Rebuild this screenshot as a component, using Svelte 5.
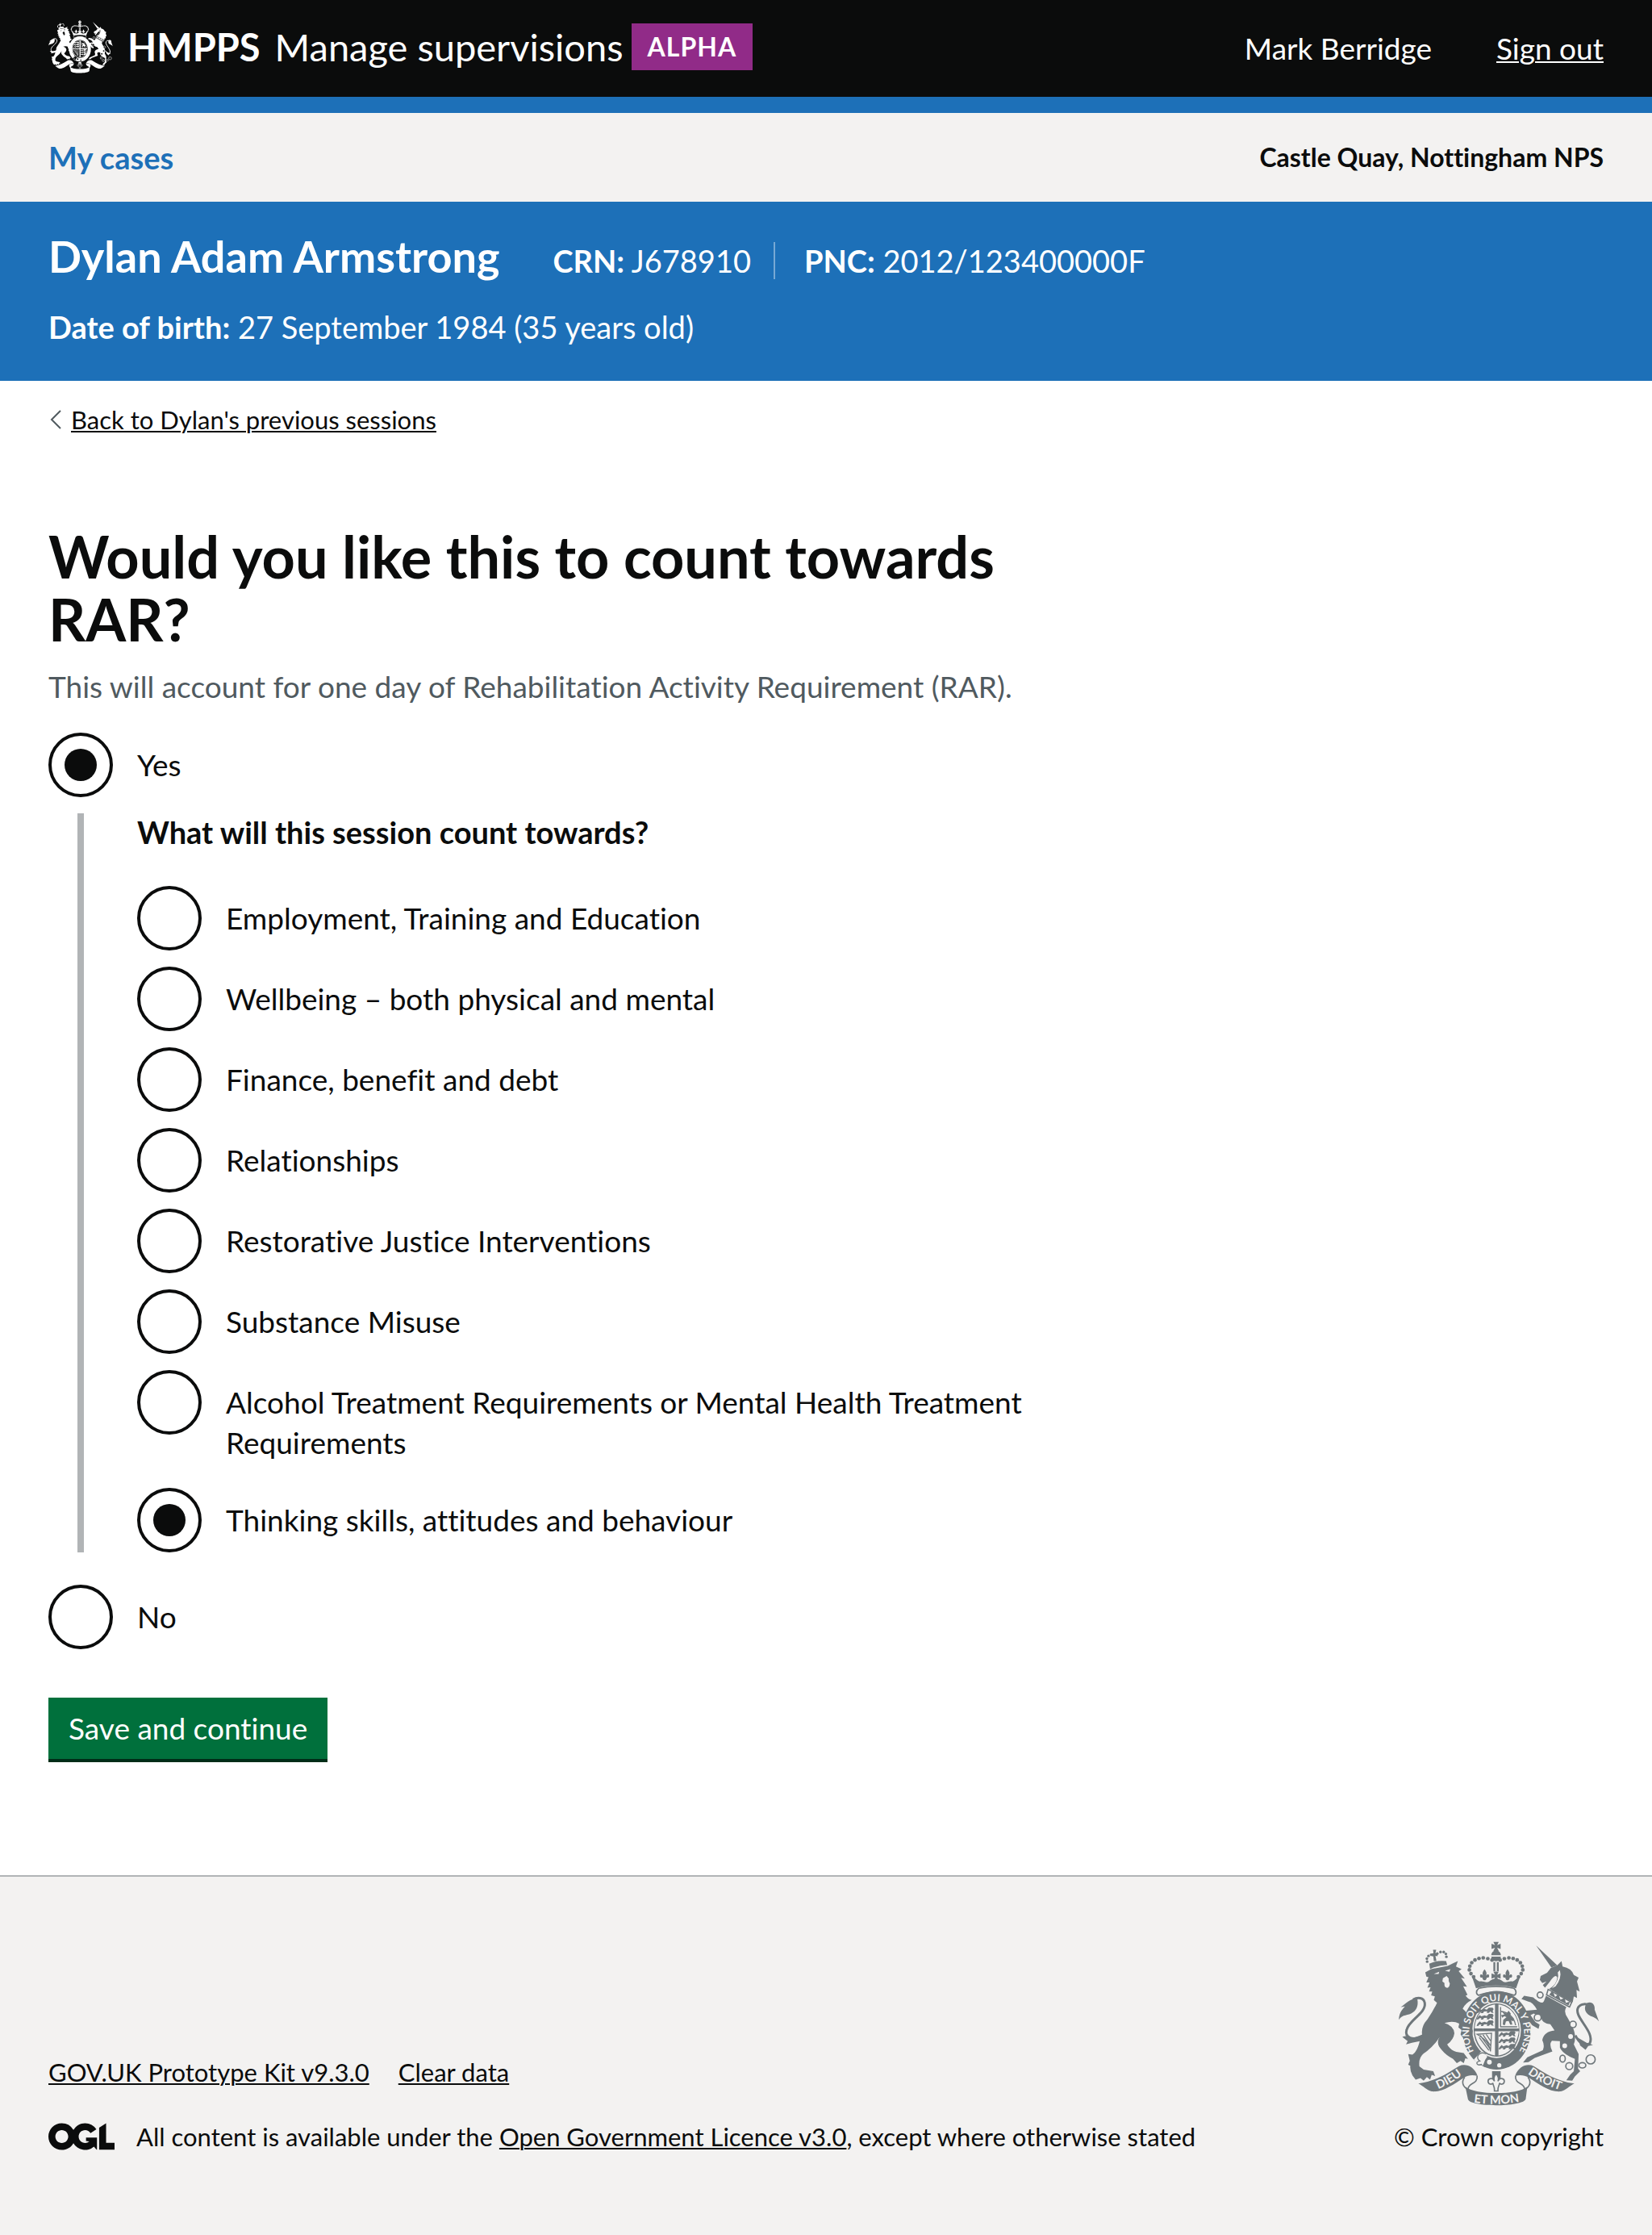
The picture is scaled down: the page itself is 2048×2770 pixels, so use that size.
<script>
  const activities = [
    { value: 'ete', label: 'Employment, Training and Education' },
    { value: 'wellbeing', label: 'Wellbeing – both physical and mental' },
    { value: 'finance', label: 'Finance, benefit and debt' },
    { value: 'relationships', label: 'Relationships' },
    { value: 'restorative', label: 'Restorative Justice Interventions' },
    { value: 'substance', label: 'Substance Misuse' },
    { value: 'treatment', label: 'Alcohol Treatment Requirements or Mental Health Treatment Requirements' },
    { value: 'thinking', label: 'Thinking skills, attitudes and behaviour' }
  ];

  let countsTowardsRar = $state('yes');
  let activity = $state('thinking');

  // Pearls on the left arch of the crown; the right arch mirrors them.
  const pearls = [
    [446, 146], [430, 141], [413, 138], [397, 140], [382, 146],
    [370, 156], [363, 169], [361, 183], [367, 197], [377, 209]
  ];
  const smallPearls = [[203, 152], [202, 141], [208, 131], [218, 126], [229, 127], [241, 122], [253, 116], [265, 116], [273, 123], [275, 134]];
  // Passant lions on the first and fourth quarters.
  const lions = [[392, 336], [392, 360], [392, 384], [474, 424], [474, 448], [474, 472]];
</script>

{#snippet fleur(x, y)}
  <path transform="translate({x} {y})" d="M0-24C9-14 9-6 4 3 7-6 15-8 17-1 18 6 12 9 8 6 9 11 5 14 3 17H-3C-5 14-9 11-8 6-12 9-18 6-17-1-15-8-7-6-4 3-9-6-9-14 0-24Z" />
{/snippet}

{#snippet pattee(x, y)}
  <path transform="translate({x} {y})" d="M-10-17H10L4-5 17-10V10L4 5 10 17H-10L-4 5-17 10V-10L-4-5Z" />
{/snippet}

{#snippet crest(detailed)}
  <svg class="crest" viewBox="94 76 754 616" fill="currentColor" aria-hidden="true">
    <!-- crown -->
    {@render pattee(461, 95)}
    <path d="M443 128A18 18 0 0 1 479 128ZM443 133H479A18 18 0 0 1 443 133Z" />
    {#each pearls as [x, y]}
      <circle cx={x} cy={y} r="7" />
      <circle cx={922 - x} cy={y} r="7" />
    {/each}
    <path d="M451 154H458V188H451ZM464 154H471V188H464Z" />
    {@render fleur(418, 205)}
    {@render fleur(504, 205)}
    {@render pattee(461, 206)}
    <path d="M370 206C384 212 389 226 401 226 410 222 428 236 438 224 450 214 472 214 484 224 494 236 512 222 521 226 533 226 538 212 552 206L536 252C490 238 432 238 386 252Z" />
    <path class="line" d="M396 252C440 242 482 242 528 252 540 262 536 276 528 278 480 262 442 262 396 278 386 274 384 262 396 252Z" />

    <!-- garter and shield -->
    <ellipse cx="463" cy="409" rx="128" ry="147" />
    <ellipse class="ground" cx="463" cy="408" rx="91" ry="105" />
    <ellipse cx="463" cy="408" rx="86" ry="100" />
    <path class="ground" d="M457 312V402H381C384 352 414 318 457 312ZM470 312C513 318 543 352 546 402H470ZM381 413H457V503C414 498 386 460 381 413ZM470 413H546C541 460 513 498 470 503Z" />
    {#each lions as [x, y]}
      <path transform="translate({x} {y})" d="M0 0L8-8 14-3 26-7 34-4 42-12 56-12 60-6 56 1 60 8 52 7 48 2 42 8 34 8 36 2 24 3 20 9 12 9 14 3 6 4 2 9-4 8Z" />
    {/each}
    <path class="thin" d="M478 322V396H540M478 338C510 342 530 362 534 390" />
    <path d="M484 340L500 346 508 336 516 346 514 356 528 366 526 376 518 372 522 388 514 388 508 374 498 376 494 390 486 388 488 370 500 360 492 356 484 362 480 352 492 350Z" />
    <path class="thin" d="M390 424L444 420 440 488C434 450 414 440 390 424ZM402 428L438 478M412 426L440 466M424 424L440 448M398 436L434 484" />
    <path class="ground" d="M378 518L404 490 420 494 428 508 420 520 412 540 392 534Z" />
    <path class="thin" d="M424 498C400 484 380 510 400 524 380 528 390 544 408 536" />
    <circle class="ground" cx="436" cy="528" r="9" />
    <circle class="ground" cx="473" cy="540" r="8" />

    <!-- lion -->
    <path d="M211 160Q240 146 274 150L278 164Q242 166 214 180Z" />
    {#each smallPearls as [x, y]}
      <circle cx={x} cy={y} r="5" />
    {/each}
    <path d="M225 108H237L234 120 242 122V132L234 130 238 150H228L226 132 220 132V122L227 120Z" />
    <path d="M196 192L218 180 280 168 300 158 318 150 311 170 332 180 321 188 344 216 330 213 352 246 338 244 354 276 347 280Q358 294 370 296 346 308 336 328 364 350 368 388L374 412 370 434 360 424 354 438 346 426 336 436 328 424 332 408 320 398 323 384Q300 372 268 382 302 392 305 420 302 444 278 462 288 482 312 490L340 494 356 516 346 514 340 532 328 524 314 532 300 516Q268 500 248 470 238 452 250 434 228 470 190 496 170 512 174 544L190 556 226 562 233 580 220 576 214 594 202 584 190 598 178 588 160 594 148 578Q138 560 140 542L132 538 138 524 132 498 148 500Q166 490 176 446L184 424Q180 394 204 368 226 336 240 306L228 296 232 282 218 278 222 264 210 264 216 248 204 250 212 230 200 230 208 210 200 208Z" />
    <path class="ground" d="M228 198L248 190 246 198ZM270 186L290 180 286 190ZM262 214L276 206 284 216Q282 226 288 234 286 252 276 250 266 248 268 232L260 226Z" />
    <path class="tail" d="M186 430C150 450 118 436 126 408 134 370 200 346 194 306 190 286 168 284 150 294" />
    <path d="M166 292C144 286 130 304 104 322L120 320C104 336 98 350 97 370 110 348 132 356 150 342 168 330 170 308 166 292ZM110 434Q128 426 146 440L188 424 176 450 146 456 124 462 130 450Z" />

    <!-- unicorn -->
    <path d="M611 92L690 166 668 174Z" />
    <path d="M666 176L690 166 706 150 710 170Q744 176 752 202L770 212 764 226 774 264 762 258 764 288 752 282 748 304 712 286 660 254Q688 238 690 212 684 194 660 230L644 250 636 240 650 226 634 232 625 220 628 206 652 194Z" />
    <path class="ground" d="M700 184Q708 214 684 244L670 252Q700 218 692 192Z" />
    <path class="line" d="M656 256L744 304 736 322 650 276Z" />
    <path d="M660 276L672 260 682 284 694 274 702 294 718 288 722 306 738 302 732 316Z" />
    <path d="M648 280L724 322Q712 342 730 364L746 394Q764 430 752 462L770 498 768 552 776 562 756 582 746 598 724 596 738 576 752 562 756 516Q712 500 700 474L700 450 670 448Q658 462 672 488L606 512 582 528 562 530 578 510 636 484Q644 466 634 446 640 414 680 410L664 386Q634 384 630 362L602 346 590 352 608 378 624 388 620 404 596 390 568 352 574 336 614 332Q598 304 582 302L556 292 566 280 600 286Q632 316 640 300Z" />
    <path class="tail" d="M758 428Q780 474 812 458C832 412 750 360 768 324 778 308 800 308 816 318" />
    <path d="M800 308C820 298 832 314 830 332L846 376C834 358 818 360 806 350 790 338 792 320 800 308ZM766 436L800 456 824 464 806 468 796 482 776 466Z" />
    <circle class="ring" cx="626" cy="277" r="11" />
    <circle cx="607" cy="302" r="8" />
    <circle class="ring" cx="617" cy="361" r="13" />
    <circle class="ring" cx="749" cy="387" r="12" />
    <circle class="ground" cx="740" cy="432" r="9" />
    <circle class="ground" cx="718" cy="467" r="9" />
    <ellipse class="ring" cx="710" cy="515" rx="10" ry="13" />
    <circle class="ring" cx="735" cy="543" r="13" />
    <ellipse class="ring" cx="784" cy="540" rx="13" ry="10" />
    <circle class="ring" cx="815" cy="518" r="17" />

    <!-- motto scroll -->
    <path d="M446 562H478V590H446Z" />
    <path class="line" d="M461 572C471 582 472 590 468 600 474 584 492 588 492 600 490 614 476 612 474 606 474 616 466 620 468 636H455C457 620 449 616 449 606 447 612 433 614 431 600 431 588 449 584 455 600 451 590 452 582 461 572Z" />
    <path d="M170 608C238 600 284 566 322 543 346 532 378 542 392 580 372 574 354 578 344 584 300 612 262 642 220 638 200 632 190 618 170 608ZM754 608C686 600 640 566 602 543 578 532 546 542 532 580 552 574 570 578 580 584 624 612 662 642 704 638 724 632 734 618 754 608Z" />
    <path class:line={detailed} d="M344 584C330 602 336 622 356 630 356 604 394 612 390 580M580 584C594 602 588 622 568 630 568 604 530 612 534 580" />
    <path d="M346 620C384 652 540 652 578 620L572 666C562 696 368 698 356 668Z" />
    {#if detailed}
      <path id="garter-curve" fill="none" d="M386 499A103 120 0 1 1 540 499" />
      <path id="dieu-curve" fill="none" d="M228 635Q290 614 348 566" />
      <path id="mon-curve" fill="none" d="M362 677Q462 694 564 674" />
      <path id="droit-curve" fill="none" d="M570 564Q630 612 712 636" />
      <g class="motto">
        <text class="garter"><textPath href="#garter-curve" startOffset="50%">HONI SOIT QUI MAL Y PENSE</textPath></text>
        <text><textPath href="#dieu-curve" startOffset="50%">DIEU</textPath></text>
        <text><textPath href="#mon-curve" startOffset="50%">ET MON</textPath></text>
        <text><textPath href="#droit-curve" startOffset="50%">DROIT</textPath></text>
      </g>
    {/if}
  </svg>
{/snippet}

<header class="masthead">
  <div class="brand">
    {@render crest(false)}
    <strong class="organisation">HMPPS</strong>
    <span class="service">Manage supervisions</span>
    <strong class="tag">ALPHA</strong>
  </div>
  <div class="account">
    <span>Mark Berridge</span>
    <a href="#sign-out">Sign out</a>
  </div>
</header>

<nav class="primary" aria-label="Primary">
  <a href="#cases">My cases</a>
  <strong>Castle Quay, Nottingham NPS</strong>
</nav>

<section class="person" aria-label="Person on probation">
  <div class="identity">
    <h2>Dylan Adam Armstrong</h2>
    <div class="reference-numbers">
      <span><b>CRN:</b> J678910</span>
      <span class="pnc"><b>PNC:</b> 2012/123400000F</span>
    </div>
  </div>
  <p><b>Date of birth:</b> 27 September 1984 (35 years old)</p>
</section>

<main>
  <div class="back">
    <svg viewBox="0 0 14 24" aria-hidden="true"><path d="M13 1L2 12L13 23" /></svg>
    <a href="#sessions">Back to Dylan's previous sessions</a>
  </div>

  <form class="question" onsubmit={(e) => e.preventDefault()}>
    <h1 id="question">Would you like this to count towards RAR?</h1>
    <p class="hint" id="hint">This will account for one day of Rehabilitation Activity Requirement (RAR).</p>

    <div role="radiogroup" aria-labelledby="question" aria-describedby="hint">
      <div class="radio">
        <input type="radio" id="rar-yes" name="rar" value="yes" bind:group={countsTowardsRar} />
        <label for="rar-yes">Yes</label>
      </div>

      {#if countsTowardsRar === 'yes'}
        <div class="conditional">
          <fieldset>
            <legend>What will this session count towards?</legend>
            <div class="options">
              {#each activities as option}
                <div class="radio">
                  <input type="radio" id="activity-{option.value}" name="activity" value={option.value} bind:group={activity} />
                  <label for="activity-{option.value}">{option.label}</label>
                </div>
              {/each}
            </div>
          </fieldset>
        </div>
      {/if}

      <div class="radio">
        <input type="radio" id="rar-no" name="rar" value="no" bind:group={countsTowardsRar} />
        <label for="rar-no">No</label>
      </div>
    </div>

    <button type="submit">Save and continue</button>
  </form>
</main>

<footer>
  <div class="meta">
    <div class="links">
      <a href="#kit">GOV.UK Prototype Kit v9.3.0</a>
      <a href="#clear">Clear data</a>
    </div>
    <div class="licence">
      <svg class="ogl" viewBox="0 0 483.2 195.7" role="img" aria-label="Open Government Licence">
        <path d="M421.5 142.8V.1l-50.7 32.3v161.1h112.4v-50.7zm-122.3-9.6A47.12 47.12 0 0 1 221 97.8c0-26 21.1-47.1 47.1-47.1 16.7 0 31.4 8.7 39.7 21.8l42.7-27.2A97.63 97.63 0 0 0 268.1 0c-36.5 0-68.3 20.1-85.1 49.7A98 98 0 0 0 97.8 0C43.9 0 0 43.9 0 97.8s43.9 97.8 97.8 97.8c36.5 0 68.3-20.1 85.1-49.7a97.76 97.76 0 0 0 149.6 25.4l19.4 22.2h3v-87.8h-80v24.3zM97.8 145c-26 0-47.1-21.1-47.1-47.1s21.1-47.1 47.1-47.1 47.1 21.1 47.1 47.1S123.8 145 97.8 145" />
      </svg>
      <span>All content is available under the <a href="#licence">Open Government Licence v3.0</a>, except where otherwise stated</span>
    </div>
  </div>
  <div class="copyright">
    {@render crest(true)}
    <span>© Crown copyright</span>
  </div>
</footer>

<style>
  :global(body) {
    background: #ffffff;
    color: #0b0c0c;
    font-family: Lato, "Open Sans", "Liberation Sans", sans-serif;
    font-size: 37px;
    line-height: 50px;
    font-variant-ligatures: none;
  }

  h1, h2, p {
    margin: 0;
  }

  a {
    color: inherit;
    text-decoration-thickness: 2px;
    text-underline-offset: 2px;
  }

  .masthead {
    display: flex;
    justify-content: space-between;
    align-items: center;
    height: 120px;
    padding: 0 60px;
    border-bottom: 20px solid #1d70b8;
    background: #0b0c0c;
    color: #ffffff;
    --ground: #0b0c0c;
  }

  .brand {
    display: flex;
    align-items: center;
    padding-bottom: 4px;
    font-size: 47px;
  }

  .brand .crest {
    width: 80px;
    height: 68px;
  }

  .organisation {
    margin: 0 18px;
  }

  .tag {
    margin-left: 10px;
    padding: 4px 20px;
    background: #912b88;
    font-size: 32px;
    letter-spacing: 1px;
  }

  .account {
    display: flex;
    gap: 80px;
  }

  .primary {
    display: flex;
    justify-content: space-between;
    align-items: center;
    height: 110px;
    padding: 0 60px;
    background: #f3f2f1;
  }

  .primary a {
    color: #1d70b8;
    font-size: 38px;
    font-weight: 700;
    text-decoration: none;
  }

  .primary strong {
    font-size: 32px;
  }

  .person {
    display: grid;
    gap: 30px;
    padding: 36px 60px 42px;
    background: #1d70b8;
    color: #ffffff;
    font-size: 38px;
  }

  .identity {
    display: flex;
    align-items: baseline;
    gap: 66px;
  }

  .identity h2 {
    font-size: 54px;
    line-height: 64px;
  }

  .reference-numbers {
    display: flex;
    gap: 28px;
    line-height: 46px;
  }

  .pnc {
    padding-left: 36px;
    border-left: 2px solid #77a9d4;
  }

  main {
    padding: 28px 60px 144px;
  }

  .back {
    display: flex;
    align-items: center;
    gap: 12px;
    padding-left: 2px;
    font-size: 31px;
    line-height: 40px;
  }

  .back svg {
    width: 14px;
    height: 24px;
    fill: none;
    stroke: #505a5f;
    stroke-width: 2;
  }

  .question {
    max-width: calc(66% - 8px);
    margin-top: 110px;
  }

  h1 {
    font-size: 72px;
    line-height: 78px;
  }

  .hint {
    margin: 20px 0 32px;
    color: #505a5f;
  }

  .radio {
    display: flex;
    align-items: flex-start;
  }

  .radio input {
    flex: none;
    display: grid;
    place-content: center;
    width: 80px;
    height: 80px;
    margin: 0;
    border: 4px solid #0b0c0c;
    border-radius: 50%;
    background: #ffffff;
    appearance: none;
  }

  .radio input:checked::before {
    content: "";
    width: 40px;
    height: 40px;
    border-radius: 50%;
    background: #0b0c0c;
  }

  .radio label {
    padding: 15px 30px 11px;
  }

  .conditional {
    margin: 20px 0 40px 36px;
    padding-left: 66px;
    border-left: 8px solid #b1b4b6;
  }

  fieldset {
    min-width: 0;
    margin: 0;
    padding: 0;
    border: 0;
  }

  legend {
    padding: 0;
    font-size: 38px;
    font-weight: 700;
    line-height: 46px;
  }

  .options {
    display: grid;
    gap: 20px;
    padding-top: 44px;
  }

  button {
    display: block;
    margin-top: 60px;
    padding: 0 25px;
    border: 0;
    background: #00703c;
    box-shadow: 0 4px 0 #002d18;
    color: #ffffff;
    font: inherit;
    line-height: 76px;
  }

  footer {
    display: flex;
    justify-content: space-between;
    align-items: flex-end;
    padding: 80px 60px 102px;
    border-top: 2px solid #b1b4b6;
    background: #f3f2f1;
    font-size: 31px;
    line-height: 40px;
    --ground: #f3f2f1;
  }

  .meta {
    display: grid;
    gap: 40px;
  }

  .links {
    display: flex;
    gap: 36px;
  }

  .licence {
    display: flex;
    align-items: center;
    gap: 27px;
  }

  .ogl {
    width: 82px;
    height: 34px;
    fill: #0b0c0c;
  }

  .copyright {
    display: flex;
    flex-direction: column;
    align-items: center;
    gap: 18px;
  }

  .copyright .crest {
    width: 250px;
    height: 204px;
    color: #6f777b;
  }

  .crest .ground {
    fill: var(--ground);
  }

  .crest .line {
    fill: var(--ground);
    stroke: currentColor;
    stroke-width: 5;
  }

  .crest .thin {
    fill: none;
    stroke: currentColor;
    stroke-width: 4;
  }

  .crest .tail {
    fill: none;
    stroke: currentColor;
    stroke-width: 9;
  }

  .crest .ring {
    fill: var(--ground);
    stroke: currentColor;
    stroke-width: 5;
  }

  .motto {
    fill: var(--ground);
    font-size: 44px;
    font-weight: 700;
    text-anchor: middle;
  }

  .motto .garter {
    font-size: 36px;
  }
</style>
